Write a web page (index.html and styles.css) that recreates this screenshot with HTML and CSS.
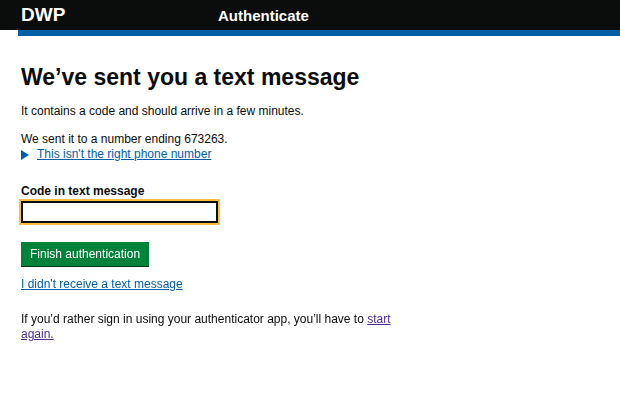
FILE: index.html
```html
<!DOCTYPE html>
<html lang="en">

<head>
    <meta charset="UTF-8">
    <meta name="viewport" content="width=device-width, initial-scale=1.0">
    <title>DWP - Authenticate</title>

    <link rel="stylesheet" href="styles.css">
</head>

<body>
    <header class="header">
        <div class="header-bar">
            <span class="header-logo">DWP</span>
            <span class="header-service">Authenticate</span>
        </div>
        <div class="header-stripe"></div>
    </header>

    <main class="main">
        <h1 class="heading">We’ve sent you a text message</h1>
        <p class="body-text">It contains a code and should arrive in a few minutes.</p>
        <p class="body-text tight">We sent it to a number ending 673263.</p>
        <div class="details">
            <span class="details-arrow"></span>
            <a href="#" class="link">This isn't the right phone number</a>
        </div>

        <form class="form">
            <label class="label" for="code">Code in text message</label>
            <input class="input" id="code" type="text" name="code" autofocus>
            <button class="button" type="submit">Finish authentication</button>
        </form>

        <p class="body-text"><a href="#" class="link">I didn't receive a text message</a></p>

        <p class="body-text last">If you’d rather sign in using your authenticator app, you’ll have to <a href="#" class="link visited">start again.</a></p>
    </main>
</body>

</html>
```

FILE: styles.css
```css
body {
    font-family: 'Liberation Sans', Arial, sans-serif;
    color: #0b0c0c;
    background-color: #fff;
    margin: 0;
    padding: 0;
}

.header-bar {
    display: flex;
    align-items: center;
    height: 30px;
    background-color: #0b0c0c;
    color: #fff;
    padding-left: 21px;
}

.header-logo {
    font-size: 19px;
    font-weight: bold;
    width: 197px;
}

.header-service {
    font-size: 15px;
    font-weight: bold;
}

.header-stripe {
    height: 6px;
    margin-left: 18px;
    background-color: #005ea5;
}

.main {
    padding: 27px 21px 0;
}

.heading {
    font-size: 23px;
    line-height: 28px;
    margin: 0 0 13px;
}

.body-text {
    font-size: 12px;
    line-height: 15px;
    margin: 0 0 13px;
}

.body-text.tight {
    margin-bottom: 0;
}

.body-text.last {
    max-width: 380px;
    margin-top: 20px;
}

.details {
    display: flex;
    align-items: center;
    font-size: 12px;
    line-height: 15px;
    margin-bottom: 22px;
}

.details-arrow {
    width: 0;
    height: 0;
    border-top: 5px solid transparent;
    border-bottom: 5px solid transparent;
    border-left: 8px solid #005ea5;
    margin-right: 8px;
}

.link {
    color: #005ea5;
    text-decoration: underline;
}

.link.visited {
    color: #4c2c92;
}

.form {
    display: flex;
    flex-direction: column;
    align-items: flex-start;
}

.label {
    font-size: 12px;
    font-weight: bold;
    line-height: 15px;
    margin-bottom: 2px;
}

.input {
    width: 197px;
    height: 22px;
    box-sizing: border-box;
    border: 2px solid #0b0c0c;
    outline: 2px solid #ffbf47;
    outline-offset: 0;
    font-family: inherit;
    font-size: 12px;
    padding: 0 3px;
    margin: 0 0 19px;
}

.button {
    background-color: #00823b;
    color: #fff;
    border: none;
    box-shadow: 0 1px 0 #003618;
    font-family: inherit;
    font-size: 12px;
    height: 24px;
    padding: 0 9px;
    margin-bottom: 11px;
    cursor: pointer;
}
```
